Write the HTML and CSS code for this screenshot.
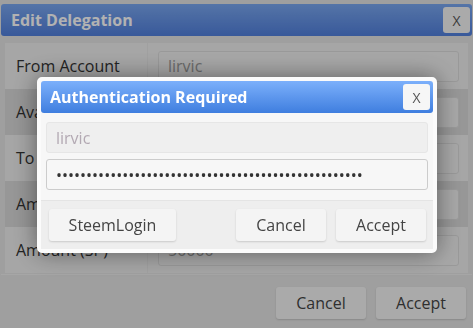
FILE: index.html
```html
<!DOCTYPE html>
<html lang="en">
<head>
  <meta charset="UTF-8" />
  <title>Edit Delegation</title>
  <link rel="stylesheet" href="styles.css">
</head>
<body>

  <div class="dialog">
    <div class="dialog-title">
      <span>Edit Delegation</span>
      <button class="close-x">X</button>
    </div>
    <div class="dialog-body">
      <div class="row">
        <label>From Account</label>
        <div class="cell"><input type="text" value="lirvic" readonly /></div>
      </div>
      <div class="row alt">
        <label>Available (SP)</label>
        <div class="cell"><input type="text" value="61234.567" readonly /></div>
      </div>
      <div class="row">
        <label>To Account</label>
        <div class="cell"><input type="text" value="steemit" /></div>
      </div>
      <div class="row alt">
        <label>Amount (VESTS)</label>
        <div class="cell"><input type="text" value="100000000" /></div>
      </div>
      <div class="row">
        <label>Amount (SP)</label>
        <div class="cell"><input type="text" value="50000" /></div>
      </div>
    </div>
    <div class="dialog-footer">
      <button>Cancel</button>
      <button>Accept</button>
    </div>
  </div>

  <!-- Auth Modal -->
  <div class="overlay">
    <div class="auth-box">
      <div class="auth-title">
        <span>Authentication Required</span>
        <button class="close-x">X</button>
      </div>
      <div class="auth-body">
        <input type="text" class="ro" value="lirvic" readonly />
        <input type="password" value="012345678901234567890123456789012345678901234567890" />
      </div>
      <div class="auth-footer">
        <button>SteemLogin</button>
        <span class="spacer"></span>
        <button>Cancel</button>
        <button>Accept</button>
      </div>
    </div>
  </div>

</body>
</html>
```

FILE: styles.css
```css
* {
  margin: 0;
  padding: 0;
  box-sizing: border-box;
}

body {
  font-family: 'Open Sans', sans-serif;
  background: #e4e4e4;
  color: #333;
  width: 473px;
  height: 328px;
  overflow: hidden;
}

button {
  font-family: inherit;
  font-size: 16px;
  color: #444;
  background: #f4f4f4;
  border: none;
  border-radius: 3px;
  box-shadow: 0 1px 2px rgba(0, 0, 0, 0.15);
  cursor: pointer;
}

input {
  font-family: inherit;
  font-size: 16px;
  height: 31px;
  border-radius: 3px;
  padding: 0 9px;
  outline: none;
}

/* background dialog */
.dialog {
  height: 328px;
  padding: 4px 1px 0;
  background: #e4e4e4;
  display: flex;
  flex-direction: column;
}

.dialog-title {
  height: 32px;
  display: flex;
  align-items: center;
  justify-content: space-between;
  padding: 0 2px 0 10px;
  background: linear-gradient(to bottom, #7aa7f0, #5180dd);
  border-radius: 3px;
  color: #fff;
  font-size: 16px;
  font-weight: 700;
}

.close-x {
  width: 27px;
  height: 26px;
  font-size: 14px;
  color: #555;
  box-shadow: none;
}

.dialog-body {
  padding: 7px 4px 0 4px;
}

.row {
  display: flex;
  height: 46px;
  background: #eeeeee;
}

.row.alt {
  background: #d8d8d8;
}

.row label {
  width: 143px;
  padding-left: 11px;
  display: flex;
  align-items: center;
  font-size: 16px;
  color: #333;
  border-right: 1px solid #e6e6e6;
}

.cell {
  flex: 1;
  display: flex;
  align-items: center;
  padding-left: 10px;
}

.cell input {
  width: 301px;
  background: #f0f0f0;
  border: 1px solid #dcdcdc;
  color: #999;
}

.dialog-footer {
  margin-top: 1px;
  flex: 1;
  display: flex;
  justify-content: flex-end;
  gap: 10px;
  padding: 12px 6px 0 0;
  background: #e4e4e4;
  border-top: 1px solid #eeeeee;
}

.dialog-footer button {
  width: 90px;
  height: 32px;
}

/* auth modal */
.overlay {
  position: fixed;
  inset: 0;
  background: rgba(0, 0, 0, 0.3);
}

.auth-box {
  position: absolute;
  left: 37px;
  top: 77px;
  width: 400px;
  border: 4px solid #fbfbfb;
  border-radius: 5px;
  background: #f7f7f7;
  box-shadow: 0 0 24px rgba(0, 0, 0, 0.45);
}

.auth-title {
  height: 32px;
  display: flex;
  align-items: center;
  justify-content: space-between;
  padding: 0 3px 0 9px;
  background: linear-gradient(to bottom, #7cb0fb, #3f7edf);
  border-radius: 3px;
  color: #fff;
  font-size: 16px;
  font-weight: 700;
}

.auth-title .close-x {
  background: #f6f6f6;
}

.auth-body {
  display: flex;
  flex-direction: column;
  gap: 6px;
  padding: 9px 5px 10px;
}

.auth-body input {
  width: 100%;
  background: #f7f7f7;
  border: 1px solid #cccccc;
  color: #333;
}

.auth-body input.ro {
  background: #efefef;
  border-color: #e6e6e6;
  color: #b3a9b3;
}

.auth-footer {
  height: 49px;
  display: flex;
  align-items: center;
  gap: 10px;
  padding: 0 7px 0 8px;
  background: #eeeeee;
  border-top: 1px solid #e4e4e4;
}

.auth-footer button {
  width: 90px;
  height: 32px;
}

.auth-footer button:first-child {
  width: 127px;
}

.spacer {
  flex: 1;
}
```
